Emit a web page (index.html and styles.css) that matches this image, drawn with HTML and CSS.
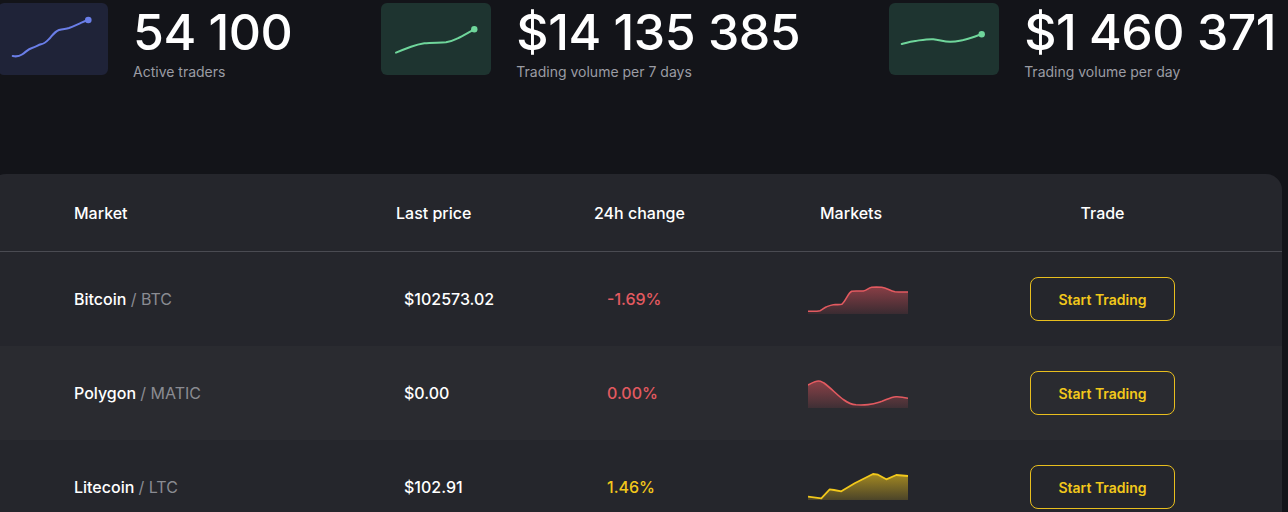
FILE: index.html
```html
<!DOCTYPE html>
<html lang="en">
<head>
  <title>Markets</title>
  <meta charset="utf-8">
  <meta name="viewport" content="width=device-width, initial-scale=1">
  <link rel="stylesheet" href="styles.css">
</head>
<body>
  <section class="stats">
    <div class="stat">
      <div class="stat-chart stat-chart-blue">
        <svg width="110" height="72" viewBox="0 0 110 72">
          <path d="M14.7 53 C19 54 21 53.5 24 51.5 C28 49 30 46 34 45 C38 44 40 42 43 41.3 C47 40.5 49 38 52 35 C55 31.5 57 28.5 61 27 C65 25.8 68 26 71 25 C75 23.5 78 22 82 20.3 C85 19 88 17.5 90.3 17" fill="none" stroke="#6a7ee8" stroke-width="2" stroke-linecap="round"/>
          <circle cx="90.3" cy="17" r="3.3" fill="#6a7ee8"/>
        </svg>
      </div>
      <div class="stat-text">
        <span class="stat-value">54 100</span>
        <span class="stat-label">Active traders</span>
      </div>
    </div>
    <div class="stat">
      <div class="stat-chart stat-chart-green">
        <svg width="110" height="72" viewBox="0 0 110 72">
          <path d="M15 49.7 C20 47.5 25 45.5 30 43.7 C35 42 39 41 43.3 40.3 C50 39.5 58 39.8 65 39.3 C70 38.8 73 37 76.7 35.3 C82 33 88 29 93.3 26.3" fill="none" stroke="#6fd69b" stroke-width="2" stroke-linecap="round"/>
          <circle cx="93.3" cy="26.3" r="3.2" fill="#6fd69b"/>
        </svg>
      </div>
      <div class="stat-text">
        <span class="stat-value">$14 135 385</span>
        <span class="stat-label">Trading volume per 7 days</span>
      </div>
    </div>
    <div class="stat">
      <div class="stat-chart stat-chart-green">
        <svg width="110" height="72" viewBox="0 0 110 72">
          <path d="M12.7 41 C18 39.5 22 38.3 27.7 37.7 C33 37 39 36 44.3 36.3 C50 36.8 55 38.5 61 38.7 C66 38.8 70 37.8 74.3 37 C80 35.8 87 33 92.7 31.3" fill="none" stroke="#6fd69b" stroke-width="2" stroke-linecap="round"/>
          <circle cx="92.7" cy="31.3" r="3.2" fill="#6fd69b"/>
        </svg>
      </div>
      <div class="stat-text">
        <span class="stat-value">$1 460 371</span>
        <span class="stat-label">Trading volume per day</span>
      </div>
    </div>
  </section>

  <section class="markets">
    <div class="row row-head">
      <div class="cell">Market</div>
      <div class="cell">Last price</div>
      <div class="cell">24h change</div>
      <div class="cell cell-chart-head">Markets</div>
      <div class="cell cell-trade">Trade</div>
    </div>

    <div class="row">
      <div class="cell cell-name">Bitcoin <span class="ticker">/ BTC</span></div>
      <div class="cell cell-price">$102573.02</div>
      <div class="cell cell-change down">-1.69%</div>
      <div class="cell">
        <svg class="spark" width="100" height="30" viewBox="0 0 100 30">
          <defs>
            <linearGradient id="fillRed1" x1="0" y1="0" x2="0" y2="1">
              <stop offset="0" stop-color="#d9525a" stop-opacity="0.55"/>
              <stop offset="1" stop-color="#d9525a" stop-opacity="0.12"/>
            </linearGradient>
          </defs>
          <path d="M0 27.3 C5 27.2 9 27.5 12 26.7 C15 25.5 16 23.5 18.7 22.7 C21 21.8 23 21 25.3 20.7 C28 20.4 31 21 33.7 20.3 C38 17 40 9 43.7 7.3 C47 6.5 52 7.3 55.3 7 C59 6.5 60 4 63.7 3.3 C67 3 70 3 73.7 3.3 C79 4 82 7 87 7.7 C92 8.2 96 8 100 8 L100 30 L0 30 Z" fill="url(#fillRed1)"/>
          <path d="M0 27.3 C5 27.2 9 27.5 12 26.7 C15 25.5 16 23.5 18.7 22.7 C21 21.8 23 21 25.3 20.7 C28 20.4 31 21 33.7 20.3 C38 17 40 9 43.7 7.3 C47 6.5 52 7.3 55.3 7 C59 6.5 60 4 63.7 3.3 C67 3 70 3 73.7 3.3 C79 4 82 7 87 7.7 C92 8.2 96 8 100 8" fill="none" stroke="#e35a60" stroke-width="1.6"/>
        </svg>
      </div>
      <div class="cell cell-trade"><button class="trade-button">Start Trading</button></div>
    </div>

    <div class="row row-alt">
      <div class="cell cell-name">Polygon <span class="ticker">/ MATIC</span></div>
      <div class="cell cell-price">$0.00</div>
      <div class="cell cell-change down">0.00%</div>
      <div class="cell">
        <svg class="spark" width="100" height="30" viewBox="0 0 100 30">
          <defs>
            <linearGradient id="fillRed2" x1="0" y1="0" x2="0" y2="1">
              <stop offset="0" stop-color="#d9525a" stop-opacity="0.55"/>
              <stop offset="1" stop-color="#d9525a" stop-opacity="0.12"/>
            </linearGradient>
          </defs>
          <path d="M0 7 C4 5 7 3 10.3 3 C13 3 14 4 16 5 C23 10 30 18 36 22 C40 25 44 26.5 48 26.8 C52 27 56 27 60 26.6 C66 26 70 24.5 74 23.3 C79 21.5 83 19 88 18.7 C93 18.5 97 19.5 100 20.3 L100 30 L0 30 Z" fill="url(#fillRed2)"/>
          <path d="M0 7 C4 5 7 3 10.3 3 C13 3 14 4 16 5 C23 10 30 18 36 22 C40 25 44 26.5 48 26.8 C52 27 56 27 60 26.6 C66 26 70 24.5 74 23.3 C79 21.5 83 19 88 18.7 C93 18.5 97 19.5 100 20.3" fill="none" stroke="#e35a60" stroke-width="1.6"/>
        </svg>
      </div>
      <div class="cell cell-trade"><button class="trade-button">Start Trading</button></div>
    </div>

    <div class="row">
      <div class="cell cell-name">Litecoin <span class="ticker">/ LTC</span></div>
      <div class="cell cell-price">$102.91</div>
      <div class="cell cell-change up">1.46%</div>
      <div class="cell">
        <svg class="spark" width="100" height="30" viewBox="0 0 100 30">
          <defs>
            <linearGradient id="fillYellow" x1="0" y1="0" x2="0" y2="1">
              <stop offset="0" stop-color="#e6bd1c" stop-opacity="0.65"/>
              <stop offset="1" stop-color="#e6bd1c" stop-opacity="0.2"/>
            </linearGradient>
          </defs>
          <path d="M0 24.7 L13.3 26.3 L21.7 17.3 L26 18 L33.3 19.3 L46.7 11.3 L65 2 L70 2.7 L78.3 7.3 L88.3 3 L100 4 L100 28 L0 28 Z" fill="url(#fillYellow)"/>
          <path d="M0 24.7 L13.3 26.3 L21.7 17.3 L26 18 L33.3 19.3 L46.7 11.3 L65 2 L70 2.7 L78.3 7.3 L88.3 3 L100 4" fill="none" stroke="#f2c81b" stroke-width="1.8" stroke-linejoin="round"/>
        </svg>
      </div>
      <div class="cell cell-trade"><button class="trade-button">Start Trading</button></div>
    </div>
  </section>
</body>
</html>
```

FILE: styles.css
```css
*, *::before, *::after {
  margin: 0;
  padding: 0;
  box-sizing: border-box;
}

html {
  color-scheme: dark;
}

body {
  height: 512px;
  overflow: hidden;
  padding-top: 3px;
  background-color: #131419;
  color: #FFFFFF;
  font-family: "Inter", "Roboto", sans-serif;
}

.stats {
  display: flex;
  gap: 89px;
  margin-left: -2px;
}

.stat {
  display: flex;
  gap: 25px;
}

.stat-chart {
  width: 110px;
  height: 72px;
  border-radius: 6px;
}

.stat-chart svg {
  display: block;
}

.stat-chart-blue {
  background-color: #1f2338;
}

.stat-chart-green {
  background-color: #1e3430;
}

.stat-text {
  display: flex;
  flex-direction: column;
}

.stat-value {
  font-size: 50px;
  font-weight: 500;
  line-height: 58px;
  letter-spacing: -0.5px;
  white-space: nowrap;
}

.stat-label {
  color: #9b9ca4;
  font-size: 14px;
  line-height: 22px;
}

.markets {
  width: 1292px;
  margin: 91px 0 0 -10px;
  border-radius: 16px 16px 0 0;
  background-color: #25262c;
  overflow: hidden;
}

.row {
  display: grid;
  grid-template-columns: 322px 198px 214px 222px 145px;
  align-items: center;
  height: 94px;
  padding-left: 84px;
  font-size: 16px;
  font-weight: 500;
}

.row-head {
  height: 78px;
  border-bottom: 1px solid #4a4b52;
}

.row-alt {
  background-color: #2a2b30;
}

.cell-chart-head {
  padding-left: 12px;
}

.cell-trade {
  text-align: center;
}

.ticker {
  color: #8a8b92;
  font-weight: 400;
}

.cell-price {
  padding-left: 8px;
}

.cell-change {
  padding-left: 13px;
}

.down {
  color: #e35a60;
}

.up {
  color: #f2c81b;
}

.spark {
  display: block;
}

.trade-button {
  width: 145px;
  height: 44px;
  border: 1px solid #e8be1e;
  border-radius: 8px;
  background-color: transparent;
  color: #f2c81b;
  font-family: inherit;
  font-size: 14px;
  font-weight: 600;
  cursor: pointer;
}
```
